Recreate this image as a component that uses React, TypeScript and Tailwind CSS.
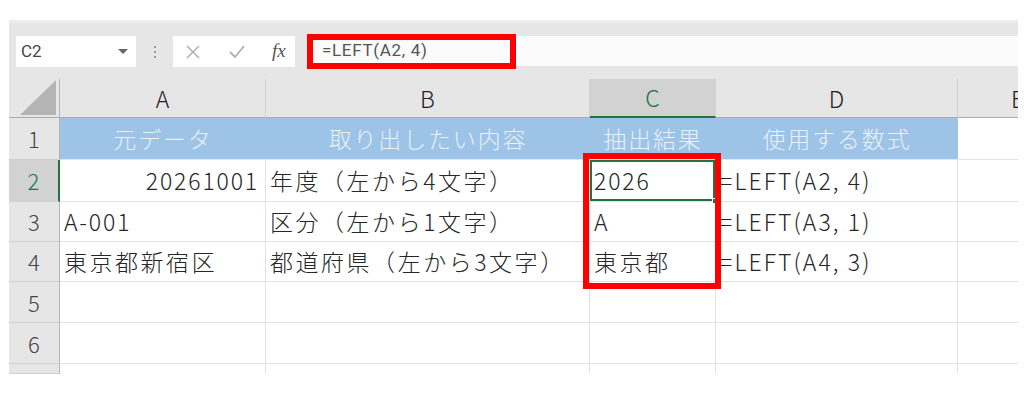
import React from 'react';

const FONT = "font-['Noto_Sans_CJK_JP','Noto_Sans',sans-serif]";

type Cell = { text?: string; align?: 'left' | 'right'; spacing?: 'jp' | 'latin' | 'formula' };

const columns = ['A', 'B', 'C', 'D', 'E'];

const heading: string[] = ['元データ', '取り出したい内容', '抽出結果', '使用する数式'];

const rows: Cell[][] = [
    [
        { text: '20261001', align: 'right', spacing: 'latin' },
        { text: '年度（左から4文字）', spacing: 'jp' },
        { text: '2026', spacing: 'latin' },
        { text: '=LEFT(A2, 4)', spacing: 'formula' },
        {},
    ],
    [
        { text: 'A-001', spacing: 'latin' },
        { text: '区分（左から1文字）', spacing: 'jp' },
        { text: 'A' },
        { text: '=LEFT(A3, 1)', spacing: 'formula' },
        {},
    ],
    [
        { text: '東京都新宿区', spacing: 'jp' },
        { text: '都道府県（左から3文字）', spacing: 'jp' },
        { text: '東京都', spacing: 'jp' },
        { text: '=LEFT(A4, 3)', spacing: 'formula' },
        {},
    ],
    [{}, {}, {}, {}, {}],
    [{}, {}, {}, {}, {}],
];

const tracking = (s?: Cell['spacing']) => {
    if (s === 'jp') return 'tracking-[0.11em]';
    if (s === 'latin') return 'tracking-[0.08em]';
    if (s === 'formula') return 'tracking-[0.09em]';
    return 'tracking-[0.04em]';
};

const RowHeader: React.FC<{ n?: number; active?: boolean }> = ({ n, active }) => (
    <div
        className={
            active
                ? 'flex items-center justify-center bg-[#d2d2d2] text-[#217346] text-[22px] font-light border-r-2 border-r-[#217346] border-b border-b-[#d0d0d0]'
                : 'flex items-center justify-center bg-[#e6e6e6] text-[#444] text-[22px] font-light border-r border-r-[#b4b4b4] border-b border-b-[#d0d0d0]'
        }
    >
        {n}
    </div>
);

const Toolbar: React.FC = () => (
    <div className="h-[59px] bg-[#e6e6e6] border-t-[3px] border-t-[#ececec] flex items-start pt-[13px] pl-[7px]">
        {/* name box */}
        <div className="w-[120px] h-[31px] bg-white flex items-center justify-between pl-[5px] pr-[8px]">
            <span className="text-[17px] text-[#444] font-['Roboto',sans-serif]">C2</span>
            <svg width="10" height="6" viewBox="0 0 10 6">
                <path d="M0 0 L10 0 L5 5 Z" fill="#666" />
            </svg>
        </div>
        {/* separator dots */}
        <div className="w-[37px] h-[31px] flex flex-col items-center justify-center gap-[3px]">
            <span className="w-[2px] h-[2px] bg-[#999]" />
            <span className="w-[2px] h-[2px] bg-[#999]" />
            <span className="w-[2px] h-[2px] bg-[#999]" />
        </div>
        {/* cancel / enter / fx */}
        <div className="w-[122px] h-[31px] bg-white flex items-center pl-[13px]">
            <svg width="14" height="14" viewBox="0 0 14 14">
                <path d="M1 1 L13 13 M13 1 L1 13" stroke="#b0b0b0" strokeWidth="1.5" />
            </svg>
            <svg width="16" height="13" viewBox="0 0 16 13" className="ml-[29px]">
                <path d="M1 7 L6 12 L15 1" stroke="#b0b0b0" strokeWidth="1.8" fill="none" />
            </svg>
            <span className="ml-[27px] text-[19px] italic text-[#555] font-['Liberation_Serif',serif]">fx</span>
        </div>
        {/* formula input */}
        <div className="relative ml-[12px] flex-1 h-[30px] bg-[#fbfbfb] flex items-center pl-[15px]">
            <span className="text-[17px] text-[#555] tracking-[0.04em] font-['Roboto',sans-serif]">=LEFT(A2, 4)</span>
            <div className="absolute left-0 top-[-2px] w-[209px] h-[35px] border-[6px] border-[#ff0000]" />
        </div>
    </div>
);

const App: React.FC = () => {
    return (
        <div className={`w-[1024px] h-[397px] bg-white ${FONT}`}>
            <div className="pt-[20px] pl-[9px] pr-[6px]">
                <Toolbar />
                <div className="relative w-[1009px] h-[295px] overflow-hidden">
                    <div className="grid grid-cols-[51px_206px_324px_126px_242px_120px] grid-rows-[39px_42px_42px_40px_40px_41px_41px_10px]">
                        {/* corner */}
                        <div className="bg-[#e6e6e6] border-r border-r-[#b4b4b4] border-b border-b-[#ababab] flex items-end justify-end pr-[3px] pb-[2px]">
                            <svg width="36" height="35" viewBox="0 0 36 35">
                                <path d="M36 0 L36 35 L0 35 Z" fill="#b4b4b4" />
                            </svg>
                        </div>
                        {columns.map(c => (
                            <div
                                key={c}
                                className={
                                    c === 'C'
                                        ? 'flex items-center justify-center bg-[#d2d2d2] text-[#217346] text-[23px] font-light border-r border-r-[#d0d0d0] border-b-2 border-b-[#217346]'
                                        : 'flex items-center justify-center bg-[#e6e6e6] text-[#222] text-[23px] font-light border-r border-r-[#d0d0d0] border-b border-b-[#ababab]'
                                }
                            >
                                {c}
                            </div>
                        ))}

                        {/* row 1: heading band */}
                        <RowHeader n={1} />
                        {heading.map(h => (
                            <div
                                key={h}
                                className="flex items-center justify-center bg-[#9dc3e6] text-[#e9f1fa] text-[23px] font-light tracking-[0.08em] border-b border-b-[#e6e6e6]"
                            >
                                {h}
                            </div>
                        ))}
                        <div className="border-b border-b-[#e2e2e2]" />

                        {rows.map((row, i) => {
                            const n = i + 2;
                            return (
                                <React.Fragment key={n}>
                                    <RowHeader n={n} active={n === 2} />
                                    {row.map((cell, j) => {
                                        const selected = n === 2 && j === 2;
                                        return (
                                            <div
                                                key={j}
                                                className={`relative flex items-center border-r border-r-[#e2e2e2] border-b border-b-[#e2e2e2] text-[23px] font-light text-[#262626] whitespace-nowrap ${tracking(cell.spacing)} ${
                                                    cell.align === 'right' ? 'justify-end pr-[6px]' : 'justify-start pl-[4px]'
                                                } ${selected ? 'shadow-[inset_0_0_0_2px_#217346]' : ''}`}
                                            >
                                                {cell.text}
                                                {selected && (
                                                    <span className="absolute right-[-3px] bottom-[-3px] w-[6px] h-[6px] bg-[#217346] border border-white" />
                                                )}
                                            </div>
                                        );
                                    })}
                                </React.Fragment>
                            );
                        })}
                        {/* partially visible row 7 */}
                        <RowHeader />
                        <div className="border-r border-r-[#e2e2e2]" />
                        <div className="border-r border-r-[#e2e2e2]" />
                        <div className="border-r border-r-[#e2e2e2]" />
                        <div className="border-r border-r-[#e2e2e2]" />
                        <div className="border-r border-r-[#e2e2e2]" />
                    </div>
                    {/* red highlight around C2:C4 */}
                    <div className="absolute left-[574px] top-[74px] w-[138px] h-[136px] border-[6px] border-[#ff0000]" />
                </div>
            </div>
        </div>
    );
};

export default App;
